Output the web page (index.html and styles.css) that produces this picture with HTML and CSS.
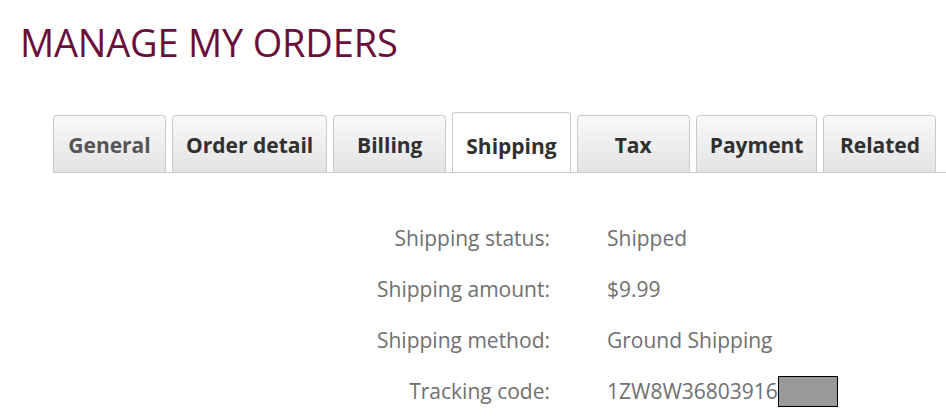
FILE: index.html
```html
<!DOCTYPE html>
<html>
<head>
<meta charset="utf-8">
<link rel="stylesheet" href="styles.css">
</head>
<body>
<h1 class="title">MANAGE MY ORDERS</h1>
<div class="tabs">
  <div class="tab tab-muted">General</div>
  <div class="tab">Order detail</div>
  <div class="tab">Billing</div>
  <div class="tab tab-active">Shipping</div>
  <div class="tab">Tax</div>
  <div class="tab">Payment</div>
  <div class="tab">Related</div>
</div>
<div class="details">
  <div class="label">Shipping status:</div><div class="value">Shipped</div>
  <div class="label">Shipping amount:</div><div class="value">$9.99</div>
  <div class="label">Shipping method:</div><div class="value">Ground Shipping</div>
  <div class="label">Tracking code:</div><div class="value">1ZW8W36803916<span class="redact"></span></div>
</div>
</body>
</html>
```

FILE: styles.css
```css
html, body {
  margin: 0;
  padding: 0;
  background: #fff;
  font-family: "Open Sans", "Liberation Sans", sans-serif;
  overflow: hidden;
}
.title {
  margin: 0;
  padding: 18px 0 0 20px;
  font-size: 38px;
  line-height: 48px;
  font-weight: 400;
  color: #6a0f3c;
  letter-spacing: -0.2px;
}
.tabs {
  margin: 46px 0 0 53px;
  display: flex;
  align-items: flex-end;
  gap: 6px;
  border-bottom: 1px solid #c9c9c9;
  height: 60px;
}
.tab {
  box-sizing: border-box;
  flex-shrink: 0;
  white-space: nowrap;
  min-width: 113px;
  height: 57px;
  padding: 2px 13px 0;
  display: flex;
  align-items: center;
  justify-content: center;
  font-size: 21px;
  font-weight: 700;
  color: #303030;
  background: linear-gradient(#f9f9f9, #e3e3e3);
  border: 1px solid #c9c9c9;
  border-bottom: none;
  border-radius: 4px 4px 0 0;
}
.tab-muted {
  color: #555;
}
.tab-active {
  height: 60px;
  padding-top: 7px;
  background: #fff;
}
.details {
  display: grid;
  grid-template-columns: 550px auto;
  column-gap: 57px;
  row-gap: 0;
  margin-top: 40px;
  font-size: 21px;
  line-height: 51px;
  color: #707070;
}
.label {
  text-align: right;
}
.value {
  display: flex;
  align-items: center;
}
.redact {
  display: inline-block;
  width: 58px;
  height: 29px;
  margin-left: 0;
  background: #999;
  border: 1px solid #000;
}
```
